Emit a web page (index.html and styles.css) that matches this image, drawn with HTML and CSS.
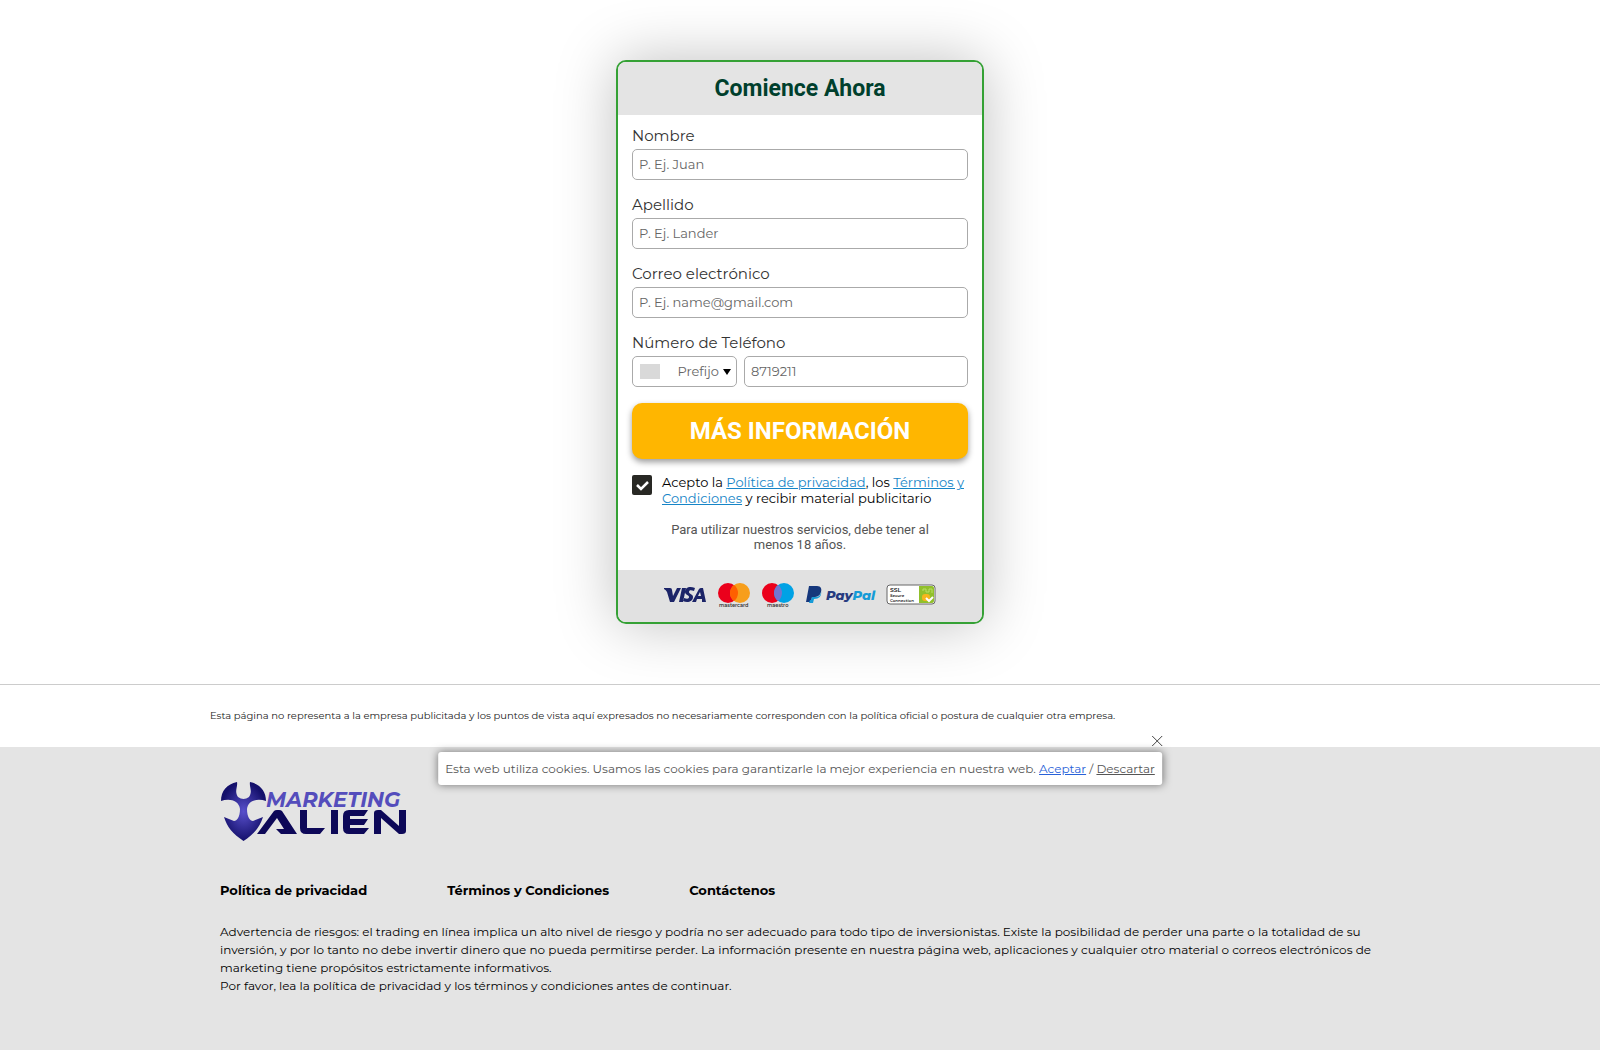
FILE: index.html
```html
<!DOCTYPE html>
<html lang="es">
<head>
<meta charset="utf-8">
<meta name="viewport" content="width=device-width, initial-scale=1">
<title>Comience Ahora</title>
<link rel="stylesheet" href="styles.css">
</head>
<body>
<main class="signup">
  <form class="card">
    <h1 class="card-title">Comience Ahora</h1>
    <div class="card-body">
      <div class="fields">
        <div class="field">
          <label for="name">Nombre</label>
          <input class="control" id="name" type="text" placeholder="P. Ej. Juan">
        </div>
        <div class="field">
          <label for="surname">Apellido</label>
          <input class="control" id="surname" type="text" placeholder="P. Ej. Lander">
        </div>
        <div class="field">
          <label for="email">Correo electrónico</label>
          <input class="control" id="email" type="email" placeholder="P. Ej. name@gmail.com">
        </div>
        <div class="field">
          <label for="phone">Número de Teléfono</label>
          <div class="phone">
            <div class="prefix control">
              <span class="flag"></span>
              <select aria-label="Prefijo"><option>Prefijo</option></select>
              <svg class="caret" viewBox="0 0 8 6" aria-hidden="true"><path d="M0 0h8L4 6z"/></svg>
            </div>
            <input class="control" id="phone" type="tel" placeholder="8719211">
          </div>
        </div>
      </div>
      <button class="submit" type="button">MÁS INFORMACIÓN</button>
      <div class="consent">
        <input id="accept" type="checkbox" checked>
        <label for="accept">Acepto la <a href="#">Política de privacidad</a>, los <a href="#">Términos y Condiciones</a> y recibir material publicitario</label>
      </div>
      <p class="age">Para utilizar nuestros servicios, debe tener al menos 18 años.</p>
    </div>
    <div class="payments">
      <svg class="pay" viewBox="0 0 274 28" role="img" aria-label="Visa, Mastercard, Maestro, PayPal, SSL">
        <g fill="#1c2468">
          <path d="M1 6h6q2 0 2 2l1 6 4-8h4l-7 14H7L4 10Q3 8 1 7z"/>
          <path d="M19 6h4l-3 14h-4z"/>
          <path d="M32 6l-1 3c-3-1-5-1-5 1s4 2 4 5c0 5-6 6-10 4l1-3c3 1 5 1 5-1s-4-2-4-5c0-5 5-6 10-4z"/>
          <path fill-rule="evenodd" d="M29 20l7-13q1-1 2-1h2l3 14h-4v-3h-5l-1 3zm6-6h3l-1-4z"/>
        </g>
        <circle cx="65" cy="11" r="10" fill="#eb001b"/>
        <circle cx="77" cy="11" r="10" fill="#f79e1b"/>
        <path d="M71 3a10 10 0 0 1 0 16 10 10 0 0 1 0-16" fill="#ff5f00"/>
        <text x="56" y="25" font-size="5" font-weight="600" fill="#333">mastercard</text>
        <circle cx="109" cy="11" r="10" fill="#eb001b"/>
        <circle cx="121" cy="11" r="10" fill="#00a2e5"/>
        <path d="M115 3a10 10 0 0 1 0 16 10 10 0 0 1 0-16" fill="#7375cf"/>
        <text x="104" y="25" font-size="5" font-weight="600" fill="#333">maestro</text>
        <path d="M146 4h8c4 0 5 3 4 6-1 4-4 5-7 5h-2l-1 5h-5z" fill="#15377c"/>
        <path d="M158 9c1 5-2 8-7 8l-1 4h-4l1-3h1l1-3h3c4 0 6-2 6-6z" fill="#179bd7"/>
        <text x="163" y="18" font-size="13" font-weight="800" font-style="italic"><tspan fill="#263b80">Pay</tspan><tspan fill="#159bd7">Pal</tspan></text>
        <rect x="224" y="3" width="48" height="19" rx="3" fill="#fff" stroke="#666"/>
        <path d="M256 4h13q2 0 2 2v13q0 2-2 2h-13z" fill="#91c02b"/>
        <path d="M260 9V7h3v3h3V7h3v4" fill="none" stroke="#b9df67"/>
        <rect x="259" y="12" width="8" height="7" rx="3" fill="#f5b61c"/>
        <path d="M263 16l3 3 4-4" fill="none" stroke="#fff" stroke-width="2"/>
        <g font-weight="600" fill="#222"><text x="227" y="10" font-size="6">SSL</text><text x="227" y="15" font-size="4">Secure</text><text x="227" y="20" font-size="4">Connection</text></g>
      </svg>
    </div>
  </form>
</main>
<section class="disclaimer">
  <p class="wrap">Esta página no representa a la empresa publicitada y los puntos de vista aquí expresados no necesariamente corresponden con la política oficial o postura de cualquier otra empresa.</p>
</section>
<footer class="footer">
  <div class="cookies" role="dialog" aria-label="Cookies">
    <button class="close" type="button" aria-label="Cerrar"><svg viewBox="0 0 12 12"><path d="M1 1l10 10M11 1L1 11"/></svg></button>
    Esta web utiliza cookies. Usamos las cookies para garantizarle la mejor experiencia en nuestra web. <a class="accept" href="#">Aceptar</a> / <a class="dismiss" href="#">Descartar</a>
  </div>
  <div class="wrap footer-inner">
    <svg class="logo" viewBox="0 0 190 62" role="img" aria-label="Marketing Alien">
      <defs><radialGradient id="glow"><stop offset="0" stop-color="#5950cc"/><stop offset="1" stop-color="#14106b"/></radialGradient></defs>
      <path d="M17 1C7 3 1 10 1 20c8-3 18-1 19 8 0 8-3 12-6 12L4 36c3 10 9 17 19.500 24C34 53 40 46 43 36l-10 4c-3 0-6-4-6-12 1-9 11-11 19-8C46 10 40 3 30 1c-1 5 3 9-1 15q-5.500 4-11 0c-4-6 0-10-1-15z" fill="url(#glow)"/>
      <text x="46" y="26" font-size="21" font-weight="700" font-style="italic" fill="#544dbc">MARKETING</text>
      <g fill="#0d0858">
        <path d="M37 53L54 30q1-1 3-1h2q2 0 3 1l15 23H61l-5-5h8l-7-11-12 16z"/>
        <path d="M80 29h7v18h18l-5 6H86q-6 0-6-6z"/>
        <path d="M111 29h7v24h-7z"/>
        <path d="M129 29h19l-4 6h-14v3h18l-4 6h-14v3h19l-5 6h-15q-6 0-6-6V35q0-6 6-6z"/>
        <path d="M154 53V32q0-3 4-3h3l18 16V29h7v21q0 3-4 3h-3l-18-16v16z"/>
      </g>
    </svg>
    <nav class="links">
      <a href="#">Política de privacidad</a>
      <a href="#">Términos y Condiciones</a>
      <a href="#">Contáctenos</a>
    </nav>
    <p class="risk">Advertencia de riesgos: el trading en línea implica un alto nivel de riesgo y podría no ser adecuado para todo tipo de inversionistas. Existe la posibilidad de perder una parte o la totalidad de su inversión, y por lo tanto no debe invertir dinero que no pueda permitirse perder. La información presente en nuestra página web, aplicaciones y cualquier otro material o correos electrónicos de marketing tiene propósitos estrictamente informativos.<br>Por favor, lea la política de privacidad y los términos y condiciones antes de continuar.</p>
  </div>
</footer>
</body>
</html>
```
FILE: styles.css
```css
* { box-sizing: border-box; }
body {
  margin: 0;
  min-height: 100vh;
  display: flex;
  flex-direction: column;
  background: #fff;
  color: #000;
  font-family: Montserrat, Inter, sans-serif;
}
p, h1 { margin: 0; }
input, select, button { font: inherit; }
.wrap { width: 100%; max-width: 1180px; margin: 0 auto; }

.signup { padding: 60px 16px; }
.card {
  max-width: 368px;
  margin: 0 auto;
  border: 2px solid #35a135;
  border-radius: 10px;
  overflow: hidden;
  background: #fff;
  box-shadow: 0 0 60px rgba(0, 0, 0, .25);
}
.card-title {
  padding-top: 1px;
  background: #e4e4e4;
  color: #003f2d;
  font: 700 23px/52px Roboto, sans-serif;
  text-align: center;
}
.card-body { padding: 10px 14px 18px; }
.fields { display: grid; gap: 14px; margin-bottom: 16px; }
.field > label { display: block; font-size: 15px; line-height: 22px; margin-bottom: 2px; color: #333; }
.control {
  display: block;
  width: 100%;
  height: 31px;
  padding: 0 6px 1px;
  border: 1px solid #aaa;
  border-radius: 5px;
  background: #fff;
  font-size: 13px;
  color: #666;
}
.control::placeholder { color: #666; opacity: 1; }
.phone { display: flex; gap: 7px; }
.prefix { display: flex; align-items: center; flex: 0 0 105px; padding: 0 5px 0 7px; }
.flag { width: 20px; height: 15px; background: #d9d9d9; }
.prefix select {
  flex: 1;
  min-width: 0;
  appearance: none;
  border: 0;
  padding: 0 4px 1px 0;
  background: none;
  color: #666;
  text-align: right;
  text-align-last: right;
}
.caret { width: 8px; height: 6px; }
.submit {
  display: block;
  width: 100%;
  height: 56px;
  padding: 0;
  border: 0;
  border-radius: 10px;
  background: #ffb600;
  color: #fff;
  font: 700 24px/56px Roboto, sans-serif;
  box-shadow: 0 3px 6px rgba(0, 0, 0, .4);
}
.consent { display: flex; gap: 10px; margin-top: 15px; font-size: 13px; line-height: 16px; }
.consent input {
  appearance: none;
  flex: none;
  width: 20px;
  height: 20px;
  margin: 1px 0 0;
  border-radius: 2px;
  background: #282824 url("data:image/svg+xml,%3Csvg xmlns='http://www.w3.org/2000/svg' viewBox='0 0 20 20'%3E%3Cpath d='M5 10l4 4 7-7' fill='none' stroke='white' stroke-width='2.5'/%3E%3C/svg%3E");
}
.consent a { color: #1685c7; }
.age {
  max-width: 270px;
  margin: 16px auto 0;
  color: #555;
  font: 400 13px/15px Roboto, sans-serif;
  text-align: center;
}
.payments { display: flex; justify-content: center; padding: 12px 0; background: #e1e1e1; }
.pay { width: 274px; height: 28px; }

.disclaimer { border-top: 1px solid #ccc; padding: 24px 16px; }
.disclaimer p { font-size: 10px; line-height: 14px; color: #222; }

.footer { position: relative; flex: 1; padding: 34px 16px 40px; background: #e4e4e4; }
.footer-inner { padding: 0 10px; }
.logo { display: block; width: 190px; height: 62px; }
.links { display: flex; flex-wrap: wrap; gap: 16px 80px; margin-top: 38px; font-size: 13px; font-weight: 700; line-height: 18px; }
.links a { color: #000; text-decoration: none; }
.risk { margin-top: 24px; font-size: 12px; line-height: 18px; }

.cookies {
  position: absolute;
  top: 5px;
  left: 50%;
  transform: translateX(-50%);
  width: max-content;
  max-width: 96%;
  padding: 8px 7px;
  border-radius: 3px;
  background: #fff;
  color: #555;
  font-size: 12px;
  line-height: 17px;
  box-shadow: 0 0 8px rgba(0, 0, 0, .5);
}
.close { position: absolute; top: -17px; right: -1px; width: 12px; height: 12px; padding: 0; border: 0; background: none; }
.close svg { display: block; fill: none; stroke: #444; }
.accept { color: #2861d8; }
.dismiss { color: #555; }
```
